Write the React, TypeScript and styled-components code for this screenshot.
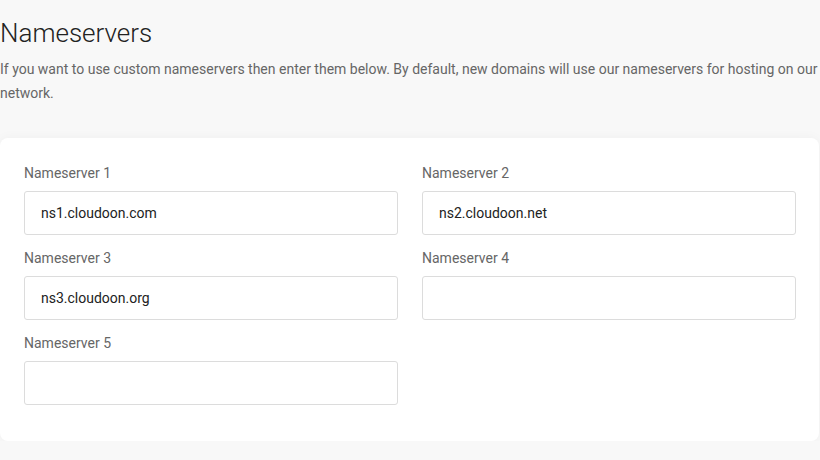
import React from "react";
import styled, { createGlobalStyle } from "styled-components";

const Global = createGlobalStyle`
  html, body { margin: 0; padding: 0; background: #f8f8f8; }
  body { font-family: Roboto, "Noto Sans", Arial, sans-serif; }
  * { box-sizing: border-box; }
`;

const Page = styled.div`
  width: 820px;
  padding-top: 17px;
`;

const Title = styled.h2`
  margin: 0;
  font-size: 26px;
  font-weight: 300;
  line-height: 32px;
  color: #222;
`;

const Description = styled.p`
  margin: 8px 0 0;
  font-size: 14px;
  line-height: 24px;
  color: #666;
`;

const Card = styled.div`
  margin-top: 33px;
  width: 819px;
  background: #fff;
  border-radius: 8px;
  box-shadow: 0 0 12px rgba(0, 0, 0, 0.04);
  padding: 25px 24px 23px;
  display: grid;
  grid-template-columns: 374px 374px;
  column-gap: 24px;
`;

const Field = styled.div`
  display: flex;
  flex-direction: column;
  margin-bottom: 13px;
`;

const Label = styled.label`
  font-size: 14px;
  line-height: 20px;
  color: #666;
  margin-bottom: 8px;
`;

const Input = styled.input`
  height: 44px;
  width: 100%;
  border: 1px solid #dcdcdc;
  border-radius: 3px;
  padding: 0 15px 0 16px;
  font-family: Roboto, "Noto Sans", Arial, sans-serif;
  font-size: 14px;
  color: #222;
  background: #fff;
  outline: none;
`;

const servers = [
  "ns1.cloudoon.com",
  "ns2.cloudoon.net",
  "ns3.cloudoon.org",
  "",
  "",
];

export default function App() {
  return (
    <>
      <Global />
      <Page>
        <Title>Nameservers</Title>
        <Description>
          If you want to use custom nameservers then enter them below. By default, new domains will use our nameservers for hosting on our network.
        </Description>
        <Card>
          {servers.map((v, i) => (
            <Field key={i}>
              <Label>Nameserver {i + 1}</Label>
              <Input defaultValue={v} />
            </Field>
          ))}
        </Card>
      </Page>
    </>
  );
}
